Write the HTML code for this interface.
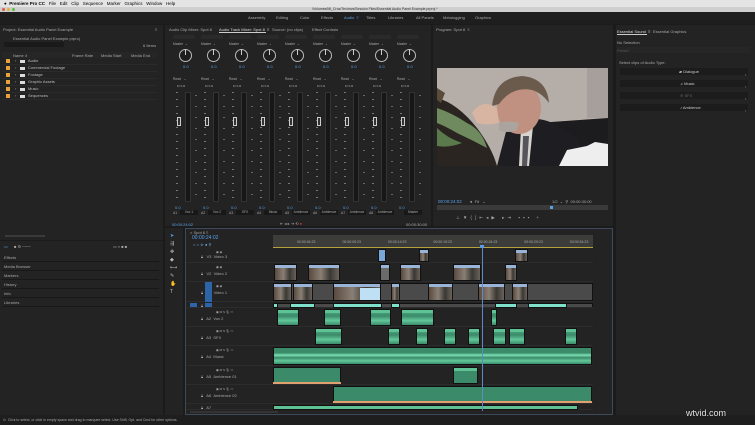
<!DOCTYPE html>
<html><head><meta charset="utf-8">
<style>
*{margin:0;padding:0;box-sizing:border-box}
body{width:755px;height:425px;overflow:hidden;background:#1b1b1b;font-family:"Liberation Sans",sans-serif;color:#9a9a9a;position:relative;font-size:4px}
.a{position:absolute}
.t{position:absolute;white-space:nowrap;font-size:4px;color:#a8a8a8}
.p{position:absolute;background:#232323}
</style></head><body>
<div class="a" style="left:0;top:0;width:755px;height:7px;background:#e4e4e4"></div>
<div class="t" style="left:4px;top:1px;color:#000;font-size:4.5px">● &nbsp;<b>Premiere Pro CC</b> &nbsp; File &nbsp; Edit &nbsp; Clip &nbsp; Sequence &nbsp; Marker &nbsp; Graphics &nbsp; Window &nbsp; Help</div>
<div class="a" style="left:0;top:7px;width:755px;height:5px;background:#cfcfcf"></div>
<div class="a" style="left:2px;top:8px;width:3px;height:3px;border-radius:50%;background:#e05a4e"></div>
<div class="a" style="left:7px;top:8px;width:3px;height:3px;border-radius:50%;background:#e2b23a"></div>
<div class="a" style="left:12px;top:8px;width:3px;height:3px;border-radius:50%;background:#5bbb45"></div>
<div class="t" style="left:312px;top:7px;color:#333;font-size:3.5px">/Volumes/Mi_Cros/Technvs/Session Files/Essential Audio Panel Example.prproj *</div>
<div class="a" style="left:0;top:12px;width:755px;height:12px;background:#1e1e1e"></div>
<div class="t" style="left:248px;top:15px">Assembly</div>
<div class="t" style="left:276px;top:15px">Editing</div>
<div class="t" style="left:300px;top:15px">Color</div>
<div class="t" style="left:321px;top:15px">Effects</div>
<div class="t" style="left:344px;top:15px;color:#5aa0e6">Audio &nbsp;≡</div>
<div class="t" style="left:366px;top:15px">Titles</div>
<div class="t" style="left:388px;top:15px">Libraries</div>
<div class="t" style="left:416px;top:15px">All Panels</div>
<div class="t" style="left:443px;top:15px">Metalogging</div>
<div class="t" style="left:475px;top:15px">Graphics</div>

<div class="p" style="left:0;top:25px;width:163px;height:215px"></div>
<div class="t" style="left:3px;top:27px">Project: Essential Audio Panel Example</div>
<div class="t" style="left:155px;top:27px">≡</div>
<div class="t" style="left:13px;top:36px">Essential Audio Panel Example.prproj</div>
<div class="a" style="left:4px;top:42px;width:60px;height:5px;background:#1a1a1a"></div>
<div class="t" style="left:143px;top:43px">6 Items</div>
<div class="a" style="left:2px;top:52px;width:155px;height:6px;background:#262626"></div>
<div class="t" style="left:13px;top:53px">Name ∧</div>
<div class="t" style="left:72px;top:53px">Frame Rate</div>
<div class="t" style="left:101px;top:53px">Media Start</div>
<div class="t" style="left:131px;top:53px">Media End</div>
<div id="proj"></div>
<div class="a" style="left:5px;top:235px;width:40px;height:2px;background:#3a3a3a"></div>
<div class="p" style="left:0;top:241px;width:163px;height:174px"></div>
<div class="t" style="left:4px;top:244px;color:#5aa0e6">▭</div>
<div class="t" style="left:14px;top:244px">■ ⚙ ───</div>
<div class="t" style="left:113px;top:244px">▭ ⌕ ■ ■</div>
<div id="panels"></div>

<div class="p" style="left:165px;top:25px;width:266px;height:201px"></div>
<div class="t" style="left:169px;top:27px">Audio Clip Mixer: Spot 8</div>
<div class="t" style="left:219px;top:27px;color:#ddd">Audio Track Mixer: Spot 8 &nbsp;≡</div>
<div class="a" style="left:219px;top:32px;width:47px;height:1px;background:#ccc"></div>
<div class="t" style="left:272px;top:27px">Source: (no clips)</div>
<div class="t" style="left:312px;top:27px">Effect Controls</div>
<div id="mix"></div>
<div class="t" style="left:172px;top:222px;color:#5aa0e6">00:00:24:02</div>
<div class="t" style="left:280px;top:221px">⇤ ◂ ▸ ⇥ ⟲ <span style="color:#d33">●</span></div>
<div class="t" style="left:406px;top:222px">00:00:30:00</div>

<div class="p" style="left:433px;top:25px;width:180px;height:201px"></div>
<div class="t" style="left:436px;top:27px">Program: Spot 8 &nbsp;≡</div>
<div class="a" style="left:437px;top:68px;width:171px;height:98px;overflow:hidden;background:#b3aba6">
<svg width="171" height="98" viewBox="0 0 171 98">
<rect width="171" height="98" fill="#b5ada8"/>
<rect x="150" y="0" width="21" height="50" fill="#a69f9b"/>
<path d="M100 55 L171 50 L171 98 L90 98Z" fill="#1c1c1e"/>
<path d="M60 98 L70 60 Q95 45 115 55 L140 70 L150 98Z" fill="#1e1e22"/>
<path d="M84 60 L96 58 L92 98 L82 98Z" fill="#d8d4d0"/>
<path d="M86 68 L92 68 L90 98 L85 98Z" fill="#55555a"/>
<ellipse cx="82" cy="40" rx="22" ry="26" fill="#c09080"/>
<path d="M55 38 Q58 10 85 8 Q110 10 112 35 Q105 25 95 22 Q75 18 62 36Z" fill="#6b5b4c"/>
<path d="M35 45 Q45 30 60 40 L62 55 Q50 58 40 55Z" fill="#d8b4a2"/>
<path d="M62 55 Q70 52 82 55 L80 62 Q70 66 62 62Z" fill="#aaa39e"/>
<path d="M0 30 Q20 35 40 60 Q55 80 60 98 L0 98Z" fill="#2a2520"/>
<path d="M0 40 Q15 45 30 55 Q45 62 50 80 Q35 72 20 65 Q8 58 0 55Z" fill="#6e8a5e"/>
<path d="M0 60 Q10 70 25 75 Q12 80 0 78Z" fill="#5a7a4c"/>
<path d="M0 20 L8 25 L4 35 L0 32Z" fill="#5a4a3a"/>
<path d="M122 98 L130 82 L150 78 L158 74 L171 76 L171 98Z" fill="#eeeeee"/>
</svg></div>
<div class="t" style="left:438px;top:199px;color:#5aa0e6;font-size:4.5px">00:00:24:02</div>
<div class="t" style="left:470px;top:199px">● &nbsp;Fit &nbsp; ⌄</div>
<div class="t" style="left:552px;top:199px">1/2 &nbsp;⌄ &nbsp;⚲ &nbsp;00:00:30:00</div>
<div class="a" style="left:437px;top:205px;width:171px;height:5px;background:#3a3a3a"></div>
<div class="a" style="left:550px;top:206px;width:3px;height:3px;background:#5aa0e6"></div>
<div class="t" style="left:456px;top:215px;font-size:4.5px;letter-spacing:3px">⊥▼{}⇤◂▶ ▸⇥ ▪▪▪ +</div>

<div class="p" style="left:616px;top:25px;width:139px;height:390px"></div>
<div class="t" style="left:617px;top:29px;color:#ddd">Essential Sound &nbsp;≡</div>
<div class="a" style="left:617px;top:34px;width:30px;height:1px;background:#ccc"></div>
<div class="t" style="left:653px;top:29px">Essential Graphics</div>
<div class="t" style="left:617px;top:40px">No Selection</div>
<div class="a" style="left:617px;top:47px;width:133px;height:6px;background:#262626"></div>
<div class="t" style="left:617px;top:48px;color:#555">Preset</div>
<div class="t" style="left:619px;top:60px">Select clips of Audio Type:</div>
<div class="a" style="left:620px;top:68px;width:128px;height:7px;background:#1c1c1c"></div>
<div class="t" style="left:679px;top:69px;color:#ccc">▰ Dialogue</div>
<div class="a" style="left:620px;top:80px;width:128px;height:7px;background:#1c1c1c"></div>
<div class="t" style="left:680px;top:81px;color:#ccc">♫ Music</div>
<div class="a" style="left:620px;top:92px;width:128px;height:7px;background:#1c1c1c"></div>
<div class="t" style="left:680px;top:93px;color:#666">≋ SFX</div>
<div class="a" style="left:620px;top:104px;width:128px;height:7px;background:#1c1c1c"></div>
<div class="t" style="left:680px;top:105px;color:#ccc">♪ Ambience</div>
<div class="t" style="left:745px;top:69px;line-height:12px">›<br>›<br>›<br>›</div>

<div class="p" style="left:165px;top:228px;width:18px;height:187px"></div>
<div class="t" style="left:170px;top:232px;font-size:5px;line-height:8px;color:#bbb"><span style="color:#5aa0e6">➤</span><br>⇶<br>✥<br>◆<br>⟷<br>✎<br>✋<br>T</div>

<div class="p" style="left:185px;top:228px;width:428px;height:187px;border:1px solid #3d4a5c"></div>
<div class="t" style="left:190px;top:230px">× Spot 8 ≡</div>
<div class="t" style="left:192px;top:235px;color:#5aa0e6;font-size:5px">00:00:24:02</div>
<div class="t" style="left:193px;top:242px;color:#7ab0e6">⌂ ∩ ⊳ ● ⚲</div>
<div class="a" style="left:273px;top:235px;width:320px;height:12px;background:#3c3c3a"></div>
<div class="a" style="left:273px;top:247px;width:320px;height:1px;background:#b5a23a"></div>
<div class="t" style="left:297px;top:240px;font-size:3.5px;word-spacing:26px;color:#aaa">00:00:04:23 00:00:09:23 00:00:14:23 00:00:19:23 00:00:24:23 00:00:29:23 00:00:34:23</div>
<div id="tl"></div>
<div class="a" style="left:482px;top:246px;width:1px;height:165px;background:#5a8ac8"></div>
<div class="a" style="left:480px;top:245px;width:4px;height:3px;background:#5a9ae6"></div>
<div class="a" style="left:190px;top:411px;width:88px;height:2px;background:#333"></div>

<div class="a" style="left:0;top:415px;width:755px;height:10px;background:#1e1e1e"></div>
<div class="t" style="left:3px;top:418px;font-size:3.5px">⊙ &nbsp;Click to select, or click in empty space and drag to marquee select. Use Shift, Opt, and Cmd for other options.</div>
<div class="a" style="left:686px;top:408px;font-size:9px;color:#e8e8e8;text-shadow:0 0 1px #000;white-space:nowrap">wtvid.com</div>

<script>
function add(parent,html){document.getElementById(parent).insertAdjacentHTML('beforeend',html)}
var items=['Audio','Commercial Footage','Footage','Graphic Assets','Music','Sequences'];
items.forEach(function(n,i){var y=58+i*7;
add('proj','<div class="a" style="left:6px;top:'+(y+1)+'px;width:4px;height:4px;background:#e9a23b"></div><div class="t" style="left:15px;top:'+y+'px">›</div><div class="a" style="left:20px;top:'+(y+1.5)+'px;width:5px;height:3px;background:#ddd"></div><div class="t" style="left:28px;top:'+y+'px;color:#bbb">'+n+'</div><div class="a" style="left:2px;top:'+(y+6)+'px;width:155px;height:1px;background:#2b2b2b"></div>')});
['Effects','Media Browser','Markers','History','Info','Libraries'].forEach(function(n,i){var y=254+i*9;
add('panels','<div class="t" style="left:4px;top:'+(y+1)+'px">'+n+'</div><div class="a" style="left:2px;top:'+(y+7)+'px;width:157px;height:1px;background:#181818"></div>')});
var labs=['A1|Vox 1','A2|Vox 2','A3|SFX','A4|Music','A5|Ambience','A6|Ambience','A7|Ambience','A8|Ambience','|Master'];
for(var i=0;i<9;i++){var x=173+i*28;var l=labs[i].split('|');
var h='<div class="a" style="left:'+x+'px;top:35px;width:22px;height:4px;background:#2a2a2a"></div>'+
'<div class="t" style="left:'+x+'px;top:42px;font-size:3.3px">Master &nbsp;⌄</div>'+
'<div class="a" style="left:'+(x+6)+'px;top:49px;width:13px;height:13px;border-radius:50%;border:1.2px solid #bbb;background:#1e1e1e"></div>'+
'<div class="a" style="left:'+(x+12)+'px;top:49px;width:1px;height:6px;background:#ccc"></div>'+
'<div class="t" style="left:'+(x+10)+'px;top:64px;color:#5aa0e6">0.0</div>'+
'<div class="t" style="left:'+x+'px;top:77px;font-size:3.3px">Read &nbsp; ⌄</div>'+
'<div class="t" style="left:'+(x+4)+'px;top:84px;font-size:3px">M S R</div>'+
'<div class="a" style="left:'+(x+12)+'px;top:92px;width:6px;height:110px;background:#171717;border:1px solid #333"></div>'+
'<div class="a" style="left:'+(x+3)+'px;top:92px;width:2px;height:110px;background:repeating-linear-gradient(#777 0 1px,transparent 1px 7px)"></div>'+
'<div class="a" style="left:'+(x+22)+'px;top:95px;width:2px;height:105px;background:repeating-linear-gradient(#666 0 1px,transparent 1px 11px)"></div>'+
'<div class="a" style="left:'+(x+4)+'px;top:117px;width:4px;height:9px;border:1px solid #ccc;background:#333"></div>'+
'<div class="t" style="left:'+(x+2)+'px;top:205px;color:#5aa0e6">0.0</div>'+
'<div class="t" style="left:'+x+'px;top:211px;font-size:3.3px">'+l[0]+'</div>'+
'<div class="a" style="left:'+(x+7)+'px;top:210px;width:18px;height:5px;background:#181818;overflow:hidden;font-size:3.3px;color:#aaa;text-align:center;white-space:nowrap;line-height:5px">'+l[1]+'</div>';
add('mix',h);}
var tr=[['V3','Video 3',248,263],['V2','Video 2',263,282],['V1','Video 1',282,302],['A1','',302,308],['A2','Vox 2',308,327],['A3','SFX',327,346],['A4','Music',346,366],['A5','Ambience 01',366,385],['A6','Ambience 02',385,404],['A7','',404,410]];
tr.forEach(function(t){var h=t[3]-t[2];
add('tl','<div class="a" style="left:186px;top:'+(t[3]-1)+'px;width:407px;height:1px;background:#2c2c2c"></div>'+
'<div class="t" style="left:201px;top:'+(t[2]+h/2-2)+'px">🔒︎ &nbsp; '+t[0]+' &nbsp;'+t[1]+'</div>'+
(h>10?'<div class="t" style="left:216px;top:'+(t[2]+2)+'px;font-size:3px">▣ '+(t[0][0]=='A'?'M S 🎙 ▭':'◉')+'</div>':''))});
add('tl','<div class="a" style="left:205px;top:282px;width:7px;height:20px;background:#2d64a8"></div><div class="a" style="left:190px;top:303px;width:7px;height:4px;background:#2d64a8"></div><div class="a" style="left:205px;top:303px;width:7px;height:4px;background:#2d64a8"></div>');
function clip(x1,x2,y1,y2,bg,hd){add('tl','<div class="a" style="left:'+x1+'px;top:'+y1+'px;width:'+(x2-x1)+'px;height:'+(y2-y1)+'px;background:'+bg+';border:1px solid #111"><div style="height:3px;background:'+hd+'"></div></div>')}
function vclip(x1,x2,y1,y2){clip(x1,x2,y1,y2,'linear-gradient(90deg,#5a4a40,#8a7f74 40%,#3a3834 70%,#6a625a)','#9ab4d8')}
clip(273,593,283,301,'#4a4a4a','#4a4a4a');clip(273,593,303,307,'#4a4a4a','#4a4a4a');
clip(378,386,249,262,'#7aa7d8','#7aa7d8');vclip(419,429,249,262);vclip(515,528,249,262);
[[274,297],[308,340],[400,421],[453,481],[505,517]].forEach(function(c){vclip(c[0],c[1],264,281)});clip(380,390,264,281,'#6a6a6a','#9ab4d8');
[[273,292],[293,313],[333,381],[391,400],[428,453],[478,505],[512,528]].forEach(function(c){vclip(c[0],c[1],283,301)});
add('tl','<div class="a" style="left:360px;top:288px;width:20px;height:12px;background:#bfe0f4"></div>');
[[273,278],[290,315],[333,382],[391,400],[495,517],[528,567]].forEach(function(c){clip(c[0],c[1],303,308,'#7fe0cc','#7fe0cc')});
var A='linear-gradient(#4fae86,#3b8a6a 40%,#62c89a 70%,#3b8a6a)';
[[277,299],[324,341],[370,391],[401,434],[491,497]].forEach(function(c){clip(c[0],c[1],309,326,A,'#5ec294')});
[[315,342],[388,400],[416,428],[444,456],[468,480],[493,506],[509,525],[565,577]].forEach(function(c){clip(c[0],c[1],328,345,A,'#5ec294')});
clip(273,592,347,365,'linear-gradient(#3b8a6a,#3b8a6a 30%,#7ae0b0 45%,#3b8a6a 60%,#62c89a 80%,#3b8a6a)','#3b8a6a');
clip(273,341,367,384,'#3b8a6a','#3b8a6a');clip(453,478,367,384,'#3b8a6a','#5ec294');
add('tl','<div class="a" style="left:273px;top:382px;width:68px;height:2px;background:#e0a070"></div>');
clip(333,592,386,403,'#3b8a6a','#3b8a6a');
add('tl','<div class="a" style="left:333px;top:401px;width:259px;height:2px;background:#e0a070"></div>');
clip(273,578,405,410,'#3b8a6a','#5ec294');
</script>
</body></html>
